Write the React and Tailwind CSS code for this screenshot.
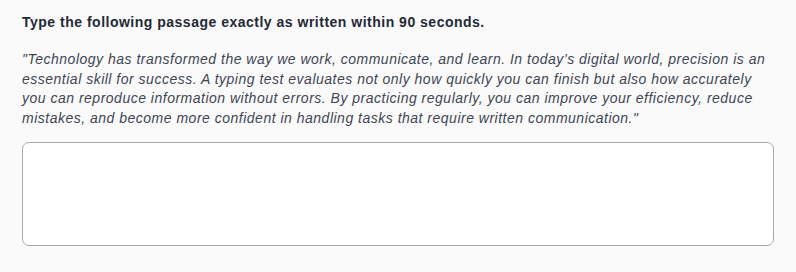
export default function App() {
  const passage =
    "\"Technology has transformed the way we work, communicate, and learn. In today\u2019s digital world, precision is an essential skill for success. A typing test evaluates not only how quickly you can finish but also how accurately you can reproduce information without errors. By practicing regularly, you can improve your efficiency, reduce mistakes, and become more confident in handling tasks that require written communication.\"";

  return (
    <div className="min-h-[272px] w-full bg-[#fafafa] px-[22px] pt-[12px] pb-6 font-['Liberation_Sans',Arial,sans-serif]">
      <h2 className="text-[14px] leading-[20px] font-bold tracking-[0.5px] text-[#1f2937]">
        Type the following passage exactly as written within 90 seconds.
      </h2>
      <p className="mt-[18px] text-[14px] leading-[19.7px] italic tracking-[0.5px] text-[#3f4653]">
        {passage}
      </p>
      <textarea
        className="mt-[13px] block h-[104px] w-full resize-none rounded-[7px] border border-[#a8a8a8] bg-white p-3 text-[14px] outline-none"
      />
    </div>
  );
}
